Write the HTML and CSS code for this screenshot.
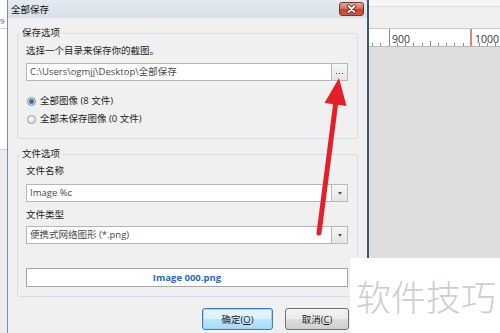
FILE: index.html
```html
<!DOCTYPE html>
<html lang="zh-CN">
<head>
  <meta charset="UTF-8">
  <title>全部保存</title>
  <link rel="stylesheet" href="styles.css">
</head>
<body>
  <div class="screen">
    <div class="side-left">
      <div class="side-top"><span class="cut-digit">9</span></div>
      <div class="side-mid"></div>
      <div class="side-bottom"></div>
    </div>

    <div class="dialog">
      <div class="titlebar">
        <span class="title">全部保存</span>
        <span class="close-btn">
          <svg width="25" height="14" viewBox="0 0 25 14">
            <path d="M9.5 4 L15.5 10 M15.5 4 L9.5 10" stroke="#5a1f16" stroke-width="3.4" stroke-linecap="round"/>
            <path d="M9.5 4 L15.5 10 M15.5 4 L9.5 10" stroke="#fff" stroke-width="1.8" stroke-linecap="round"/>
          </svg>
        </span>
      </div>

      <div class="dialog-body">
        <fieldset class="group">
          <legend>保存选项</legend>
          <div class="hint">选择一个目录来保存你的截图。</div>
          <div class="field">
            <div class="text-box">C:\Users\ogmjj\Desktop\全部保存</div>
            <div class="side-btn browse"><span class="dots"></span></div>
          </div>
          <div class="radios">
            <div class="radio-row"><span class="radio checked"></span>全部图像 (8 文件)</div>
            <div class="radio-row"><span class="radio"></span>全部未保存图像 (0 文件)</div>
          </div>
        </fieldset>

        <fieldset class="group group-file">
          <legend>文件选项</legend>
          <div class="label">文件名称</div>
          <div class="field field-gap">
            <div class="text-box">Image %c</div>
            <div class="side-btn"><span class="caret"></span></div>
          </div>
          <div class="label label-gap">文件类型</div>
          <div class="field">
            <div class="text-box">便携式网络图形 (*.png)</div>
            <div class="side-btn"><span class="caret"></span></div>
          </div>
          <div class="preview">Image 000.png</div>
        </fieldset>

        <div class="actions">
          <button class="btn btn-default">确定(<u>O</u>)</button>
          <button class="btn btn-cancel">取消(<u>C</u>)</button>
        </div>
      </div>
    </div>

    <div class="app">
      <div class="app-strip"></div>
      <div class="app-toolbar"></div>
      <div class="ruler">
        <svg width="131" height="17" viewBox="0 0 131 17">
          <g stroke="#8c8c8c" stroke-width="1">
            <line x1="3.5" y1="14" x2="3.5" y2="17"/>
            <line x1="11.5" y1="14" x2="11.5" y2="17"/>
            <line x1="20.5" y1="0" x2="20.5" y2="17"/>
            <line x1="28.5" y1="14" x2="28.5" y2="17"/>
            <line x1="36.5" y1="14" x2="36.5" y2="17"/>
            <line x1="44.5" y1="14" x2="44.5" y2="17"/>
            <line x1="53.5" y1="14" x2="53.5" y2="17"/>
            <line x1="61.5" y1="12" x2="61.5" y2="17"/>
            <line x1="69.5" y1="14" x2="69.5" y2="17"/>
            <line x1="77.5" y1="14" x2="77.5" y2="17"/>
            <line x1="85.5" y1="14" x2="85.5" y2="17"/>
            <line x1="94.5" y1="14" x2="94.5" y2="17"/>
            <line x1="110.5" y1="14" x2="110.5" y2="17"/>
            <line x1="118.5" y1="14" x2="118.5" y2="17"/>
            <line x1="126.5" y1="14" x2="126.5" y2="17"/>
          </g>
          <line x1="102" y1="0" x2="102" y2="17" stroke="#c0303a" stroke-width="1.2"/>
          <text x="23" y="14" class="ruler-num">900</text>
          <text x="106" y="14" class="ruler-num">1000</text>
        </svg>
      </div>
      <div class="canvas"></div>
    </div>
  </div>

  <svg class="arrow" width="500" height="333" viewBox="0 0 500 333">
    <line x1="319" y1="233" x2="336" y2="101" stroke="#e3202a" stroke-width="5" stroke-linecap="round"/>
    <polygon points="339,78 324.5,103 346.5,106" fill="#e3202a"/>
  </svg>

  <div class="watermark">软件技巧</div>
</body>
</html>
```

FILE: styles.css
```css
body {
  margin: 0;
  width: 500px;
  height: 333px;
  overflow: hidden;
  position: relative;
  font-family: 'Open Sans', 'Noto Sans CJK SC', sans-serif;
  font-size: 9.5px;
  color: #1e1e1e;
}
.screen {
  display: flex;
  width: 500px;
  height: 333px;
}

/* window behind, left edge */
.side-left {
  width: 7px;
  display: flex;
  flex-direction: column;
  overflow: hidden;
  background: #fff;
}
.side-top {
  height: 28px;
  border-bottom: 1px solid #cfcfcf;
}
.cut-digit {
  display: block;
  margin: 16px 0 0 0;
  font-size: 8px;
  line-height: 9px;
  color: #555;
}
.side-mid {
  height: 120px;
  border-bottom: 1px solid #cfcfcf;
}
.side-bottom {
  flex: 1;
  background: #ececec;
}

/* dialog */
.dialog {
  width: 362px;
  box-sizing: border-box;
  border-left: 1px solid #7f8d98;
  border-right: 2px solid #3e596b;
  background: #f0f0f0;
  display: flex;
  flex-direction: column;
}
.titlebar {
  height: 18px;
  display: flex;
  align-items: center;
  padding-left: 3px;
  background: linear-gradient(#e3eaf2, #d7e0ea);
}
.title {
  font-size: 9.5px;
  color: #111;
}
.close-btn {
  margin-left: auto;
  margin-right: 3px;
  width: 25px;
  height: 14px;
  box-sizing: border-box;
  border: 1px solid #7a3328;
  border-radius: 3px;
  background: linear-gradient(#e8a99b 0%, #d7725f 45%, #c2402c 55%, #cf5d45 100%);
  display: flex;
  align-items: center;
  justify-content: center;
}
.close-btn svg {
  display: block;
  margin: -1px;
}
.dialog-body {
  padding: 9px 9px 0 9px;
}

.group {
  margin: 0;
  padding: 0 9px 0 8px;
  border: 1px solid #d6dde3;
  border-radius: 3px;
  min-width: 0;
}
.group legend {
  margin-left: -6px;
  padding: 0 2px;
  line-height: 12px;
  font-size: 9.5px;
}
.group-file {
  margin-top: 9px;
}
.hint {
  margin-top: 6px;
  line-height: 12px;
}
.field {
  margin-top: 6px;
  height: 18px;
  display: flex;
}
.text-box {
  flex: 1;
  box-sizing: border-box;
  height: 18px;
  border: 1px solid #b4b6bb;
  border-right: none;
  background: #fff;
  padding: 0 3px;
  line-height: 16px;
  color: #4a4a4a;
  white-space: nowrap;
  overflow: hidden;
}
.side-btn {
  width: 17px;
  box-sizing: border-box;
  height: 18px;
  border: 1px solid #b9b9b9;
  background: linear-gradient(#f6f6f6, #e6e6e6);
  display: flex;
  align-items: center;
  justify-content: center;
}
.browse {
  align-items: flex-end;
  padding-bottom: 6px;
}
.dots {
  width: 1px;
  height: 1px;
  background: #444;
  box-shadow: -3px 0 0 #444, 3px 0 0 #444;
}
.caret {
  width: 0;
  height: 0;
  border-left: 2.5px solid transparent;
  border-right: 2.5px solid transparent;
  border-top: 3px solid #555;
}

.radios {
  margin-top: 14px;
  margin-bottom: 13px;
  display: flex;
  flex-direction: column;
  gap: 6px;
}
.radio-row {
  display: flex;
  align-items: center;
  height: 12px;
  line-height: 12px;
}
.radio {
  width: 9px;
  height: 9px;
  box-sizing: border-box;
  margin: 0 4px 0 1px;
  border: 1px solid #999;
  border-radius: 50%;
  background: radial-gradient(circle at 40% 40%, #fbfbfb, #dadada);
}
.radio.checked {
  border-color: #7d8e9c;
  background: radial-gradient(circle, #2b6eab 0, #2b6eab 1.8px, #9fc4e4 2.8px, #e9eef2 3.2px);
}

.label {
  margin-top: 5px;
  line-height: 12px;
}
.field-gap {
  margin-top: 7px;
}
.label-gap {
  margin-top: 7px;
}
.label-gap + .field {
  margin-top: 5px;
}
.preview {
  margin-top: 24px;
  margin-bottom: 9px;
  height: 19px;
  box-sizing: border-box;
  border: 1px solid #a8a8a8;
  background: #fff;
  text-align: center;
  line-height: 17px;
  font-weight: 700;
  color: #2c67b5;
}

.actions {
  margin-top: 11px;
  padding-right: 9px;
  display: flex;
  justify-content: flex-end;
  gap: 12px;
}
.btn {
  height: 22px;
  box-sizing: border-box;
  padding: 0;
  border: 1px solid #707070;
  border-radius: 3px;
  background: linear-gradient(#f3f3f3 0%, #ebebeb 49%, #dddddd 50%, #cfcfcf 100%);
  font-family: 'Open Sans', 'Noto Sans CJK SC', sans-serif;
  font-size: 9.5px;
  color: #1e1e1e;
}
.btn-default {
  width: 71px;
  border-color: #3c7fb1;
  background: linear-gradient(#eaf6fd 0%, #d9f0fc 49%, #bee6fd 50%, #a7d9f5 100%);
  box-shadow: inset 0 0 0 1px #9bd6f5;
}
.btn-cancel {
  width: 64px;
}

/* application behind, right side */
.app {
  flex: 1;
  display: flex;
  flex-direction: column;
}
.app-strip {
  height: 6px;
  background: #f7f7f7;
  border-bottom: 1px solid #dedede;
}
.app-toolbar {
  height: 21px;
  background: #efefef;
  border-bottom: 1px solid #c9c9c9;
}
.ruler {
  height: 17px;
  background: #fff;
  border-bottom: 1px solid #b8b8b8;
}
.ruler svg {
  display: block;
}
.ruler-num {
  font-family: 'Open Sans', sans-serif;
  font-size: 10.5px;
  fill: #333;
}
.canvas {
  flex: 1;
  background: #dedede;
}

/* overlays */
.arrow {
  position: absolute;
  left: 0;
  top: 0;
  pointer-events: none;
}
.watermark {
  position: absolute;
  left: 350px;
  top: 258px;
  width: 150px;
  height: 75px;
  box-sizing: border-box;
  padding-left: 6px;
  background: #fff;
  font-family: 'Noto Sans CJK SC', sans-serif;
  font-size: 35px;
  font-weight: 300;
  line-height: 75px;
  color: #cdcdcd;
  white-space: nowrap;
}
```
